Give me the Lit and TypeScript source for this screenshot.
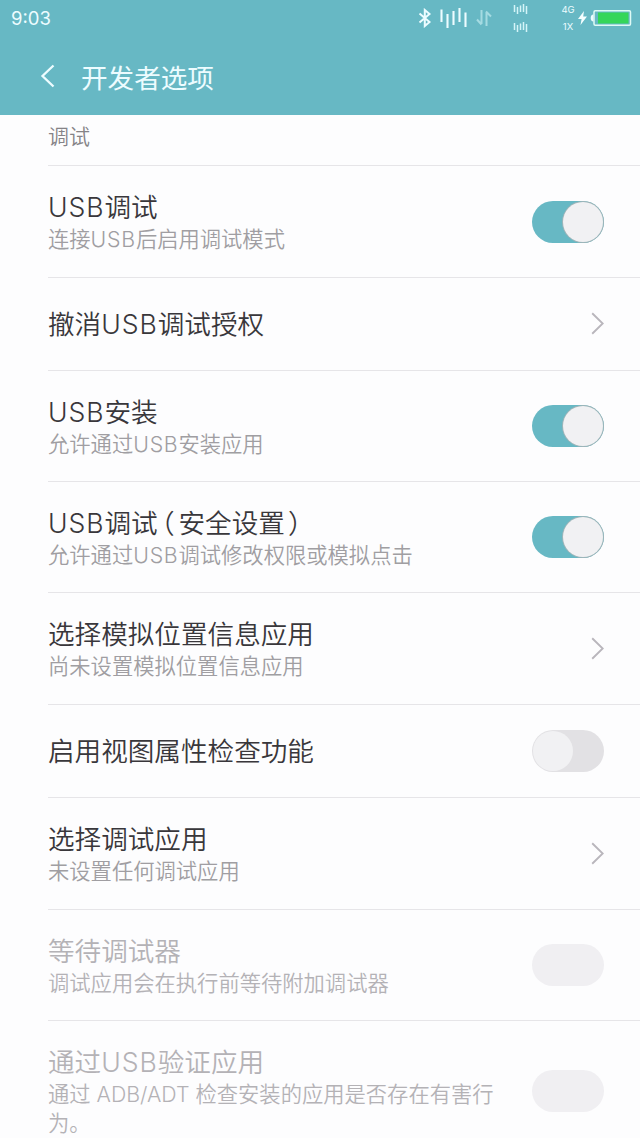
import { LitElement, html, css, nothing } from "lit";
import { customElement, property } from "lit/decorators.js";
import { classMap } from "lit/directives/class-map.js";

type Control = "on" | "off" | "disabled" | "link";

interface Item {
  title: string;
  sub?: string;
  control: Control;
  size: "tall" | "mid" | "short" | "auto";
}

const ITEMS: Item[] = [
  { title: "USB调试", sub: "连接USB后启用调试模式", control: "on", size: "tall" },
  { title: "撤消USB调试授权", control: "link", size: "short" },
  { title: "USB安装", sub: "允许通过USB安装应用", control: "on", size: "mid" },
  { title: "USB调试（安全设置）", sub: "允许通过USB调试修改权限或模拟点击", control: "on", size: "mid" },
  { title: "选择模拟位置信息应用", sub: "尚未设置模拟位置信息应用", control: "link", size: "tall" },
  { title: "启用视图属性检查功能", control: "off", size: "short" },
  { title: "选择调试应用", sub: "未设置任何调试应用", control: "link", size: "tall" },
  { title: "等待调试器", sub: "调试应用会在执行前等待附加调试器", control: "disabled", size: "mid" },
  { title: "通过USB验证应用", sub: "通过 ADB/ADT 检查安装的应用是否存在有害行为。", control: "disabled", size: "auto" },
];

// Wraps Latin words and full-width brackets so each gets its own spacing.
const typeset = (text: string) =>
  text.split(/(USB|（|）)/).map((part) => {
    if (part === "USB") return html`<span class="latin">${part}</span>`;
    if (part === "（") return html`<span class="open">${part}</span>`;
    if (part === "）") return html`<span class="close">${part}</span>`;
    return part;
  });

@customElement("status-bar")
export class StatusBar extends LitElement {
  static styles = css`
    :host {
      display: flex;
      align-items: flex-start;
      height: 38px;
      padding-left: 11px;
      color: #edfcff;
      font-family: Inter, "Liberation Sans", sans-serif;
      font-weight: 400;
    }
    .time {
      flex: 1;
      font-size: 18.5px;
      line-height: 37px;
    }
    svg {
      display: block;
      flex: none;
    }
    .bt { margin: 8px 8px 0 0; }
    .signal { margin: 8px 8px 0 0; }
    .data { margin: 9px 20px 0 0; }
    .sims { margin: 3px 32px 0 0; }
    .net {
      width: 14px;
      margin: 3px 3px 0 0;
      font-size: 9.5px;
      text-align: center;
    }
    .net div { height: 17px; line-height: 14px; }
    .bolt { margin: 11px 3px 0 0; }
    .battery { margin: 9px 8px 0 0; }
  `;

  render() {
    return html`
      <div class="time">9:03</div>
      <svg class="bt" width="14" height="20" viewBox="0 0 14 20" fill="none" stroke="#edfcff" stroke-width="2">
        <path d="M1.5 5.5 11.5 14 6.8 18V2l4.7 4-10 8.5" />
      </svg>
      <svg class="signal" width="28" height="20" viewBox="0 0 28 20" stroke="#edfcff" stroke-width="2.1">
        <path d="M1.5 1.5v12.5M7.5 6v14M13.5 3v14M19.5 0v14M25.5 4.5v14.5" />
      </svg>
      <svg class="data" width="17" height="18" viewBox="0 0 17 18" fill="none" stroke="#a5dbe2" stroke-width="2">
        <path d="M5.5 1v14M1 10.5l4.500 5M10.5 17V3M10 2.5l5 5" />
      </svg>
      <svg class="sims" width="16" height="29" viewBox="0 0 16 29" stroke="#d4f4f8" stroke-width="1.5">
        <path d="M1.5 2v7M4.5 4v7M7.5 2.5V9M10.5 1v8M13.5 3v8M1.5 20v7M4.5 22v7M7.5 20.5V27M10.5 19v8M13.5 21v8" />
      </svg>
      <div class="net"><div>4G</div><div>1X</div></div>
      <svg class="bolt" width="9" height="14" viewBox="0 0 9 14" fill="#f4feff">
        <path d="M6 0 0 8h3.6L2.500 14 9 5.500H5.200z" />
      </svg>
      <svg class="battery" width="42" height="18" viewBox="0 0 42 18">
        <path d="M3.5 5.5C1.5 5.500.7 7 .7 9s.8 3.500 2.800 3.500z" fill="#edfcff" />
        <rect x="4" y="1.700" width="36.500" height="14.500" rx="1.200" fill="none" stroke="#dffaf5" stroke-width="1.500" />
        <rect x="8" y="3.500" width="30.500" height="11" fill="#35d65a" />
      </svg>
    `;
  }
}

@customElement("setting-row")
export class SettingRow extends LitElement {
  @property({ attribute: false }) item!: Item;

  static styles = css`
    :host { display: block; }
    .row {
      box-sizing: border-box;
      display: flex;
      align-items: center;
      justify-content: space-between;
      margin-left: 48px;
      padding-right: 36px;
      border-bottom: 1px solid #e6e5e8;
    }
    .tall { height: 112px; }
    .mid { height: 111px; }
    .short { height: 93px; }
    .auto { padding-top: 23px; padding-bottom: 24px; border-bottom: none; }
    .text { width: 455px; padding-top: 1px; }
    .title {
      font-size: 26.6px;
      line-height: 35px;
      color: #39373b;
      white-space: nowrap;
    }
    .sub {
      font-size: 21.3px;
      line-height: 28.5px;
      color: #a09ea2;
    }
    .disabled .title, .disabled .sub { color: #b4b2b6; }
    .latin { letter-spacing: 0.036em; }
    .open, .close { font-feature-settings: "halt" 1; }
    .open { margin-left: 3.5px; margin-right: 4px; }
    .close { margin-left: 3px; }
    .toggle {
      box-sizing: border-box;
      display: flex;
      flex: none;
      width: 72px;
      height: 42px;
      padding: 1px;
      border-radius: 21px;
      background: #e2e1e4;
    }
    .toggle.on { background: #67b8c4; justify-content: flex-end; }
    .toggle.disabled { background: #f0eff2; }
    .knob {
      width: 40px;
      height: 40px;
      border-radius: 50%;
      background: #f1f1f3;
    }
    .on .knob { box-shadow: 0 0 0 1px #9fb5b9; }
    .disabled .knob { background: none; }
    svg { display: block; flex: none; }
  `;

  render() {
    const { title, sub, control, size } = this.item;
    return html`
      <div class=${classMap({ row: true, [size]: true, disabled: control === "disabled" })}>
        <div class="text">
          <div class="title">${typeset(title)}</div>
          ${sub ? html`<div class="sub">${typeset(sub)}</div>` : nothing}
        </div>
        ${control === "link"
          ? html`<svg width="13" height="24" viewBox="0 0 13 24" fill="none" stroke="#b9b6bc" stroke-width="1.9">
              <path d="M1.2 1.300 11.700 11.500 1.200 21.700" />
            </svg>`
          : html`<div class="toggle ${control}"><div class="knob"></div></div>`}
      </div>
    `;
  }
}

@customElement("app-root")
export class AppRoot extends LitElement {
  static styles = css`
    :host {
      display: block;
      width: 640px;
      height: 1138px;
      overflow: hidden;
      background: #fdfdfe;
      font-family: Inter, "Noto Sans CJK SC", sans-serif;
      font-weight: 350;
    }
    .header {
      height: 115px;
      background: #67b8c4;
    }
    .bar {
      display: flex;
      align-items: center;
      height: 76px;
      padding-left: 40px;
      color: #edfcff;
      font-size: 26.6px;
      font-weight: 400;
    }
    .bar svg { margin-right: 26px; }
    .section {
      box-sizing: border-box;
      height: 51px;
      margin-left: 48px;
      border-bottom: 1px solid #e6e5e8;
      font-size: 21px;
      line-height: 44px;
      color: #858387;
    }
  `;

  render() {
    return html`
      <div class="header">
        <status-bar></status-bar>
        <div class="bar">
          <svg width="15" height="24" viewBox="0 0 15 24" fill="none" stroke="#edfcff" stroke-width="2.3">
            <path d="M13.5 1.500 2.500 12l11 10.500" />
          </svg>
          <span>开发者选项</span>
        </div>
      </div>
      <div class="section">调试</div>
      ${ITEMS.map((item) => html`<setting-row .item=${item}></setting-row>`)}
    `;
  }
}
